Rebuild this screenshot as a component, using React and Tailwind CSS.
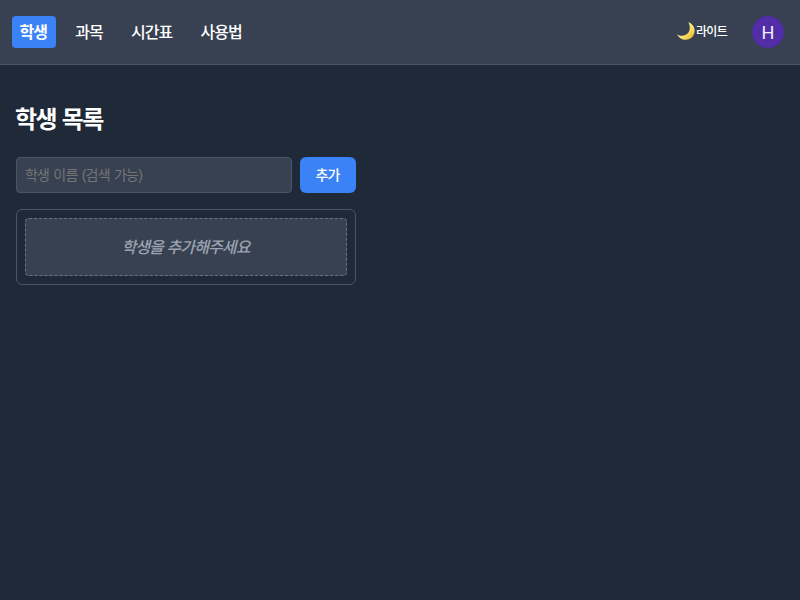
const navItems = ['학생', '과목', '시간표', '사용법'];

function MoonIcon() {
  return (
    <svg className="-mt-0.5 h-5 w-5" viewBox="0 0 20 20">
      <defs>
        <linearGradient id="moon" x1="0" y1="0" x2="1" y2="1">
          <stop offset="0.35" stopColor="#fff09a" />
          <stop offset="0.7" stopColor="#f7d352" />
          <stop offset="1" stopColor="#d99a1c" />
        </linearGradient>
      </defs>
      <path
        d="M12.4 1.2C16 2.5 18.7 5.6 18.7 9.8C18.7 14.9 14.8 18.8 9.8 18.8C5.8 18.8 2.6 16.7 1.1 13.2C4 15.3 8.2 15.4 11 13.1C14.3 10.4 14.6 5.3 12.4 1.2Z"
        fill="url(#moon)"
      />
    </svg>
  );
}

function Header() {
  return (
    <header className="flex h-[65px] items-center justify-between border-b border-[#4b5563] bg-[#374151] pr-4 pl-3">
      <nav className="flex gap-3">
        {navItems.map((item, i) => (
          <a
            key={item}
            className={
              i === 0
                ? 'flex h-8 items-center rounded bg-[#3b82f6] pt-px pr-[8.5px] pl-[7.5px] text-base font-bold text-white'
                : 'flex h-8 items-center rounded pt-px pr-[8.5px] pl-[7.5px] text-base font-medium text-white'
            }
          >
            {item}
          </a>
        ))}
      </nav>
      <div className="flex items-center gap-[25px]">
        <button className="flex items-center text-xs font-medium tracking-[-0.06em] text-white">
          <MoonIcon />
          라이트
        </button>
        <div className="flex h-8 w-8 items-center justify-center rounded-full bg-[#512da8] pt-px font-[Roboto] text-lg tracking-normal text-[#f1eef8]">
          H
        </div>
      </div>
    </header>
  );
}

export default function App() {
  return (
    <div className="min-h-screen bg-[#1f2937] font-['Liberation_Sans','Noto_Sans_CJK_KR',sans-serif] tracking-[-0.055em] text-white">
      <Header />
      <main className="w-[372px] px-4 pt-[37px]">
        <h1 className="mb-[19px] -ml-px text-2xl leading-9 font-bold tracking-[-0.07em] [word-spacing:1px]">학생 목록</h1>
        <div className="mb-4 flex gap-2">
          <input
            className="h-9 w-[276px] rounded border border-[#4b5563] bg-[#374151] px-2 text-sm tracking-[-0.055em] [word-spacing:1px] placeholder:text-[#757575]"
            placeholder="학생 이름 (검색 가능)"
          />
          <button className="h-9 w-14 rounded-md bg-[#3b82f6] pr-px text-sm font-medium tracking-[-0.06em]">추가</button>
        </div>
        <section className="rounded-md border border-[#4b5563] p-2">
          <div className="flex h-[58px] items-center justify-center rounded border border-dashed border-[#6b7280] bg-[#374151] pt-0.5 pr-px text-base font-medium text-[#9ca3af] italic">
            학생을 추가해주세요
          </div>
        </section>
      </main>
    </div>
  );
}
